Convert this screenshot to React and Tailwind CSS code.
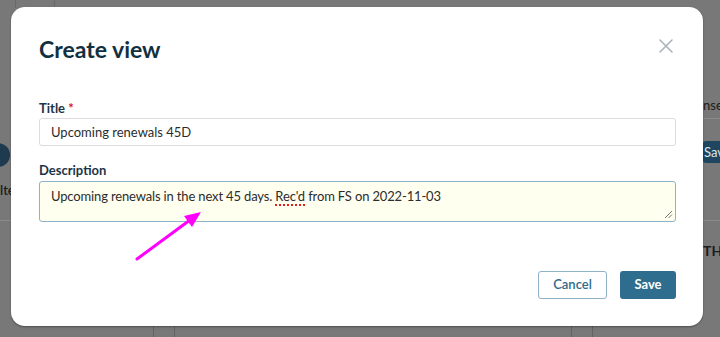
import React from 'react';

function CloseIcon() {
    return (
        <svg width="14" height="14" viewBox="0 0 14 14" fill="none" stroke="#a9b4bb" strokeWidth="1.6" strokeLinecap="round">
            <path d="M1 1L13 13M13 1L1 13" />
        </svg>
    );
}

function ResizeGrip() {
    return (
        <svg width="9" height="9" viewBox="0 0 9 9" stroke="#777" strokeWidth="1">
            <path d="M1 8L8 1M4.5 8L8 4.5" />
        </svg>
    );
}

export default function App() {
    return (
        <div className="relative w-[720px] h-[337px] overflow-hidden bg-[#787878]" style={{ fontFamily: 'Lato, "Open Sans", sans-serif' }}>
            {/* dimmed page behind the dialog */}
            <div className="absolute inset-0 flex justify-between">
                <div className="w-[12px] flex flex-col pt-[143px]">
                    <div className="h-[24px] w-[24px] -ml-[14px] rounded-full bg-[#1d3a4f]" />
                    <div className="mt-[14px] text-[13px] font-semibold text-[#1c1c1c]">lte</div>
                    <div className="mt-[19px] h-px bg-[#8a8a8a]" />
                </div>
                <div className="w-[17px] flex flex-col pt-[97px]">
                    <div className="text-[13px] leading-[16px] whitespace-nowrap text-[#1c1c1c]">nse</div>
                    <div className="mt-[5px] h-px bg-[#8a8a8a]" />
                    <div className="mt-[22px] h-[22px] rounded-l-[3px] bg-[#1e4660] text-[13px] leading-[22px] whitespace-nowrap text-[#dfe6ea] pl-[1px]">Sav</div>
                    <div className="mt-[57px] h-px bg-[#8a8a8a]" />
                    <div className="mt-[22px] text-[14px] leading-[16px] font-bold text-[#1c1c1c]">TH</div>
                </div>
            </div>
            <div className="absolute left-[15px] top-0 h-[8px] w-[40px] border-x border-[#6a6a6a]" />
            <div className="absolute left-0 right-0 bottom-0 h-[11px] flex">
                <div className="ml-[153px] w-[22px] border-x border-[#626262]" />
                <div className="ml-[396px] w-[22px] border-x border-[#626262]" />
            </div>

            {/* dialog */}
            <div className="absolute left-[11px] top-[7px] w-[692px] h-[319px] rounded-[14px] bg-white shadow-[0_1px_2px_rgba(0,0,0,0.35)] px-[28px] pt-[27px]">
                <div className="flex items-start justify-between w-[637px]">
                    <h1 className="text-[23px] leading-[30px] font-bold text-[#12303f]">Create view</h1>
                    <button className="mt-[5px] mr-[3px]"><CloseIcon /></button>
                </div>

                <div className="mt-[36px] text-[13px] leading-[17px] font-bold text-[#1d3446]">
                    Title <span className="text-[#d0103a]">*</span>
                </div>
                <div className="mt-[1px] h-[28px] w-[637px] rounded-[3px] border border-[#dcdcdc] px-[11px] text-[13px] leading-[26px] text-[#2c2c2c]">
                    Upcoming renewals 45D
                </div>

                <div className="mt-[16px] text-[13px] leading-[17px] font-bold text-[#1d3446]">Description</div>
                <div className="relative mt-[2px] h-[41px] w-[637px] rounded-[3px] border border-[#8fb2c9] bg-[#fffff0] px-[11px] pt-[4px] text-[13px] leading-[20px] tracking-[-0.15px] text-[#2c2c2c]">
                    Upcoming renewals in the next 45 days.{' '}
                    <span className="underline decoration-dotted decoration-[#e0201f] decoration-[1.5px] underline-offset-[3px]">Rec'd</span>{' '}
                    from FS on 2022-11-03
                    <div className="absolute right-[2px] bottom-[2px] flex"><ResizeGrip /></div>
                </div>

                <div className="mt-[49px] flex justify-end gap-[13px] w-[637px]">
                    <button className="h-[28px] w-[69px] rounded-[3px] border border-[#8fb2c9] bg-white text-[13px] font-semibold text-[#2d6a8c]">Cancel</button>
                    <button className="h-[28px] w-[56px] rounded-[3px] bg-[#2f6d8f] text-[13px] font-bold text-white">Save</button>
                </div>
            </div>

            {/* annotation arrow */}
            <svg className="absolute left-0 top-0" width="720" height="337" viewBox="0 0 720 337">
                <line x1="137" y1="259" x2="190" y2="220" stroke="#ff00ff" strokeWidth="3" strokeLinecap="round" />
                <polygon points="201,212 184,216 192,227" fill="#ff00ff" />
            </svg>
        </div>
    );
}
